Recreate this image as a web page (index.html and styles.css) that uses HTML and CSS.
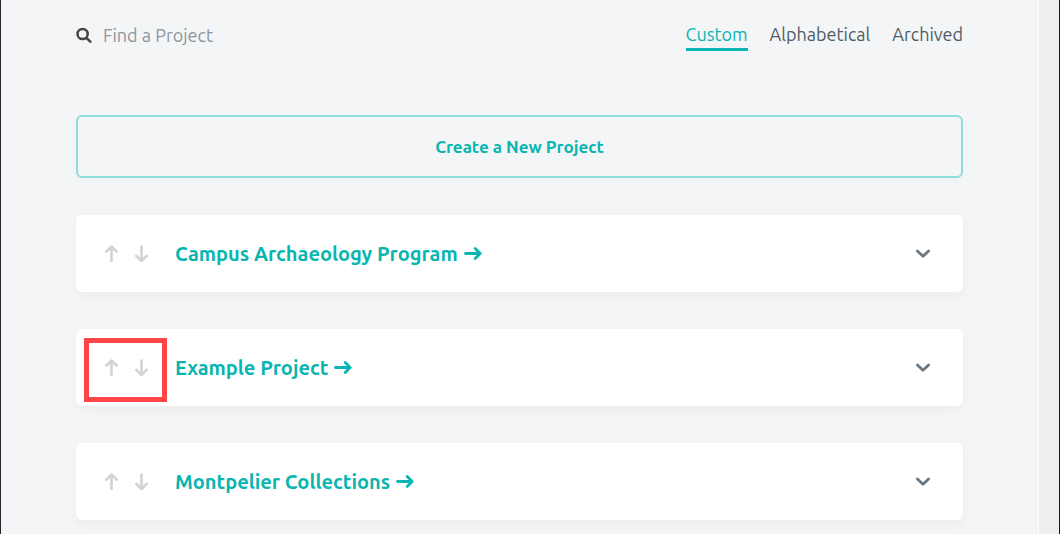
FILE: index.html
```html
<!DOCTYPE html>
<html lang="en">
<head>
<meta charset="utf-8">
<title>Projects</title>
<link rel="stylesheet" href="styles.css">
</head>
<body>
<svg class="sprite" aria-hidden="true">
  <symbol id="up" viewBox="0 0 14 18"><path d="M7.5 16V1.5M2.2 6.7l5.3-5.2 5.3 5.2"/></symbol>
  <symbol id="down" viewBox="0 0 14 18"><path d="M7.5 1.5V16M2.2 10.8 7.5 16l5.3-5.2"/></symbol>
  <symbol id="right" viewBox="0 0 18 14"><path d="M1.5 6.5h14.5M11.2 1.5l5 5-5 5"/></symbol>
  <symbol id="chevron" viewBox="0 0 16 10"><path d="M2.4 2 8 7.2 13.6 2"/></symbol>
</svg>
<div class="page">
  <main class="content">
    <header class="toolbar">
      <div class="search">
        <svg class="search-icon" viewBox="0 0 16 16" aria-hidden="true"><circle cx="6.6" cy="7" r="5.1"/><path d="m10.4 10.8 3.9 3.9"/></svg>
        <input class="search-input" type="text" placeholder="Find a Project" aria-label="Find a Project">
      </div>
      <nav class="tabs">
        <a class="tab tab-active" href="#custom">Custom</a>
        <a class="tab" href="#alphabetical">Alphabetical</a>
        <a class="tab" href="#archived">Archived</a>
      </nav>
    </header>
    <button class="create" type="button">Create a New Project</button>
    <section class="projects">
      <article class="card">
        <div class="order">
          <button class="icon-button" type="button" aria-label="Move up"><svg class="order-icon"><use href="#up"/></svg></button>
          <button class="icon-button" type="button" aria-label="Move down"><svg class="order-icon"><use href="#down"/></svg></button>
        </div>
        <a class="title" href="#campus">Campus Archaeology Program<svg class="arrow"><use href="#right"/></svg></a>
        <button class="icon-button expand" type="button" aria-label="Expand"><svg class="chevron"><use href="#chevron"/></svg></button>
      </article>
      <article class="card">
        <div class="order">
          <button class="icon-button" type="button" aria-label="Move up"><svg class="order-icon"><use href="#up"/></svg></button>
          <button class="icon-button" type="button" aria-label="Move down"><svg class="order-icon"><use href="#down"/></svg></button>
        </div>
        <a class="title" href="#example">Example Project<svg class="arrow"><use href="#right"/></svg></a>
        <button class="icon-button expand" type="button" aria-label="Expand"><svg class="chevron"><use href="#chevron"/></svg></button>
        <span class="highlight"></span>
      </article>
      <article class="card">
        <div class="order">
          <button class="icon-button" type="button" aria-label="Move up"><svg class="order-icon"><use href="#up"/></svg></button>
          <button class="icon-button" type="button" aria-label="Move down"><svg class="order-icon"><use href="#down"/></svg></button>
        </div>
        <a class="title" href="#montpelier">Montpelier Collections<svg class="arrow"><use href="#right"/></svg></a>
        <button class="icon-button expand" type="button" aria-label="Expand"><svg class="chevron"><use href="#chevron"/></svg></button>
      </article>
    </section>
  </main>
  <div class="gutter"></div>
</div>
</body>
</html>
```
FILE: styles.css
```css
* {
  box-sizing: border-box;
}

body {
  margin: 0;
  font-family: Ubuntu, "Noto Sans", sans-serif;
  font-size: 18px;
  color: #4f5b66;
  background: #f4f5f7;
}

.sprite {
  display: none;
}

svg {
  display: block;
  fill: none;
  stroke: currentColor;
  stroke-linecap: round;
  stroke-linejoin: round;
}

.page {
  display: flex;
  min-height: 100vh;
  border-left: 1px solid #25262b;
  border-right: 1px solid #151515;
}

.content {
  flex: 1;
  padding: 20px 75px 14px;
}

.gutter {
  width: 21px;
  background: #eeeeee;
  border-left: 1px solid #ffffff;
}

.toolbar {
  display: flex;
  justify-content: space-between;
  margin-bottom: 64px;
}

.search {
  display: flex;
  flex: 1;
  align-items: center;
  gap: 11px;
  padding-bottom: 2px;
}

.search-icon {
  width: 16px;
  height: 16px;
  color: #444444;
  stroke-width: 2.5;
}

.search-input {
  flex: 1;
  min-width: 0;
  padding: 0;
  border: 0;
  outline: 0;
  font: inherit;
  color: inherit;
  background: transparent;
}

.search-input::placeholder {
  color: #8b959c;
  opacity: 1;
}

.tabs {
  display: flex;
  gap: 22px;
}

.tab {
  border-bottom: 3px solid transparent;
  line-height: 28px;
  color: inherit;
  text-decoration: none;
}

.tab-active {
  border-bottom-color: #08b5b0;
  color: #08b5b0;
}

.create {
  display: block;
  width: 100%;
  padding: 18px;
  border: 2px solid #90ded9;
  border-radius: 6px;
  font: inherit;
  font-size: 17px;
  font-weight: 600;
  line-height: 23px;
  color: #08b5b0;
  background: transparent;
  box-shadow: 0 4px 10px rgba(0, 0, 0, 0.02);
}

.projects {
  display: grid;
  gap: 37px;
  margin-top: 37px;
}

.card {
  position: relative;
  display: flex;
  align-items: center;
  min-height: 77px;
  padding: 0 32px 0 28px;
  border-radius: 6px;
  background: #ffffff;
  box-shadow: 0 4px 12px rgba(0, 0, 0, 0.04);
}

.order {
  display: flex;
  gap: 16px;
  margin-right: 27px;
  color: #d0d4d8;
}

.icon-button {
  padding: 0;
  border: 0;
  color: inherit;
  background: transparent;
}

.order-icon {
  width: 14px;
  height: 18px;
  stroke-width: 2.6;
}

.title {
  display: flex;
  align-items: center;
  gap: 6px;
  font-size: 20px;
  font-weight: 600;
  line-height: 28px;
  color: #08b5b0;
  text-decoration: none;
}

.arrow {
  width: 18px;
  height: 14px;
  stroke-width: 2.8;
}

.expand {
  margin-left: auto;
  color: #6b7780;
}

.chevron {
  width: 16px;
  height: 10px;
  stroke-width: 2.8;
}

.highlight {
  position: absolute;
  top: 9px;
  left: 8px;
  width: 83px;
  height: 64px;
  border: 5px solid #ff4545;
  pointer-events: none;
}
```
